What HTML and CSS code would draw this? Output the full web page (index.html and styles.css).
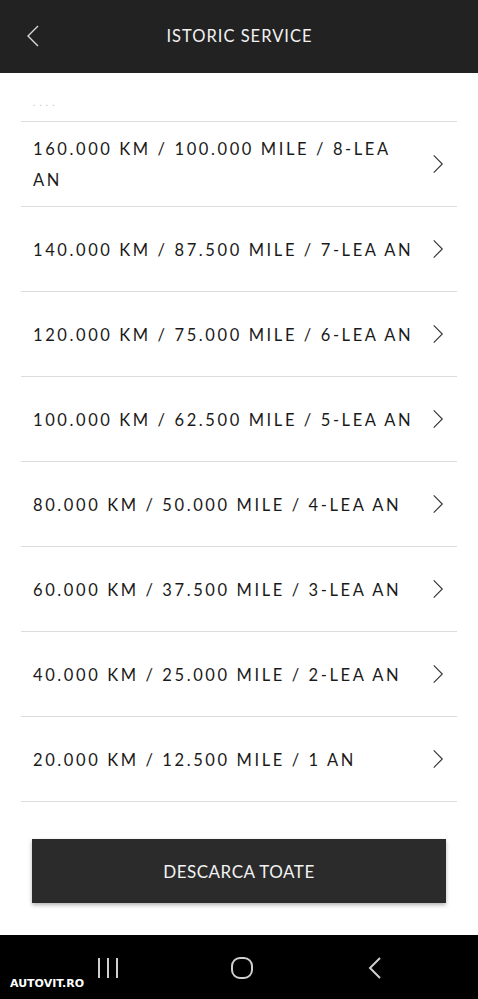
FILE: index.html
```html
<!DOCTYPE html>
<html lang="ro">
<head>
<meta charset="utf-8">
<title>Istoric service</title>
<link rel="stylesheet" href="styles.css">
</head>
<body>
<div class="screen">
  <header class="topbar">
    <span class="back">
      <svg width="14" height="22" viewBox="0 0 14 22"><path d="M12 1 L2 11 L12 21" fill="none" stroke="#d8d8d8" stroke-width="1.4"/></svg>
    </span>
    <h1 class="title">ISTORIC SERVICE</h1>
  </header>
  <main class="content">
    <div class="more"><span class="dots">. . . .</span></div>
    <ul class="list">
      <li class="row"><span class="label">160.000 KM / 100.000 MILE / 8-LEA AN</span><span class="chev"><svg width="14" height="22" viewBox="0 0 14 22"><path d="M2 1 L12 11 L2 21" fill="none" stroke="#333" stroke-width="1.3"/></svg></span></li>
      <li class="row"><span class="label">140.000 KM / 87.500 MILE / 7-LEA AN</span><span class="chev"><svg width="14" height="22" viewBox="0 0 14 22"><path d="M2 1 L12 11 L2 21" fill="none" stroke="#333" stroke-width="1.3"/></svg></span></li>
      <li class="row"><span class="label">120.000 KM / 75.000 MILE / 6-LEA AN</span><span class="chev"><svg width="14" height="22" viewBox="0 0 14 22"><path d="M2 1 L12 11 L2 21" fill="none" stroke="#333" stroke-width="1.3"/></svg></span></li>
      <li class="row"><span class="label">100.000 KM / 62.500 MILE / 5-LEA AN</span><span class="chev"><svg width="14" height="22" viewBox="0 0 14 22"><path d="M2 1 L12 11 L2 21" fill="none" stroke="#333" stroke-width="1.3"/></svg></span></li>
      <li class="row"><span class="label">80.000 KM / 50.000 MILE / 4-LEA AN</span><span class="chev"><svg width="14" height="22" viewBox="0 0 14 22"><path d="M2 1 L12 11 L2 21" fill="none" stroke="#333" stroke-width="1.3"/></svg></span></li>
      <li class="row"><span class="label">60.000 KM / 37.500 MILE / 3-LEA AN</span><span class="chev"><svg width="14" height="22" viewBox="0 0 14 22"><path d="M2 1 L12 11 L2 21" fill="none" stroke="#333" stroke-width="1.3"/></svg></span></li>
      <li class="row"><span class="label">40.000 KM / 25.000 MILE / 2-LEA AN</span><span class="chev"><svg width="14" height="22" viewBox="0 0 14 22"><path d="M2 1 L12 11 L2 21" fill="none" stroke="#333" stroke-width="1.3"/></svg></span></li>
      <li class="row"><span class="label">20.000 KM / 12.500 MILE / 1 AN</span><span class="chev"><svg width="14" height="22" viewBox="0 0 14 22"><path d="M2 1 L12 11 L2 21" fill="none" stroke="#333" stroke-width="1.3"/></svg></span></li>
    </ul>
    <div class="actions">
      <button class="download">DESCARCA TOATE</button>
    </div>
  </main>
  <nav class="sysnav">
    <span class="nav-item">
      <svg width="24" height="22" viewBox="0 0 24 22"><path d="M3 1 V21 M12 1 V21 M21 1 V21" stroke="#cfcfcf" stroke-width="2" fill="none"/></svg>
    </span>
    <span class="nav-item">
      <svg width="24" height="24" viewBox="0 0 24 24"><rect x="2" y="2" width="20" height="20" rx="8" stroke="#cfcfcf" stroke-width="2" fill="none"/></svg>
    </span>
    <span class="nav-item">
      <svg width="16" height="24" viewBox="0 0 16 24"><path d="M13 2 L3 12 L13 22" stroke="#cfcfcf" stroke-width="2" fill="none"/></svg>
    </span>
    <span class="watermark">AUTOVIT.RO</span>
  </nav>
</div>
</body>
</html>
```

FILE: styles.css
```css
* { box-sizing: border-box; }
html, body { margin: 0; padding: 0; background: #fff; }
body { font-family: Lato, "Open Sans", sans-serif; color: #1a1a1a; }
.screen { width: 478px; height: 999px; display: flex; flex-direction: column; overflow: hidden; }

.topbar {
  height: 73px;
  background: #222;
  display: flex;
  align-items: center;
  justify-content: center;
  position: relative;
}
.back { position: absolute; left: 26px; top: 25px; display: flex; }
.title {
  margin: 0 0 2px 0;
  color: #f2f2f2;
  font-size: 16.5px;
  font-weight: 400;
  letter-spacing: 1px;
  padding-left: 1px;
}

.content { flex: 1; padding: 0 21px 0 21px; display: flex; flex-direction: column; }
.more { height: 49px; border-bottom: 1px solid #dcdcdc; padding: 17px 0 0 12px; }
.dots { font-size: 9px; color: #bbb; letter-spacing: 1px; }

.list { list-style: none; margin: 0; padding: 0; }
.row {
  min-height: 85px;
  border-bottom: 1px solid #dcdcdc;
  display: flex;
  align-items: center;
  padding: 2px 13px 0 12px;
}
.label {
  flex: 1;
  font-size: 16.5px;
  line-height: 31px;
  letter-spacing: 2.6px;
  color: #1a1a1a;
  padding-right: 12px;
}
.chev { width: 12px; display: flex; justify-content: center; margin-top: -2px; }

.actions { padding: 37px 11px 0 11px; }
.download {
  width: 100%;
  height: 64px;
  background: #2b2b2b;
  color: #f2f2f2;
  border: 0;
  font-family: Lato, "Open Sans", sans-serif;
  font-size: 17px;
  letter-spacing: 0.5px;
  box-shadow: 0 2px 4px rgba(0,0,0,0.3);
}

.sysnav {
  height: 64px;
  background: #000;
  display: flex;
  align-items: center;
  position: relative;
}
.nav-item { position: absolute; top: 22px; display: flex; }
.nav-item:nth-child(1) { left: 96px; top: 22px; }
.nav-item:nth-child(2) { left: 230px; top: 21px; }
.nav-item:nth-child(3) { left: 367px; top: 21px; }
.watermark {
  position: absolute;
  left: 10px;
  top: 42px;
  color: #fff;
  font-family: "DejaVu Sans", sans-serif;
  font-weight: 700;
  font-size: 11px;
  letter-spacing: 0;
}
```
